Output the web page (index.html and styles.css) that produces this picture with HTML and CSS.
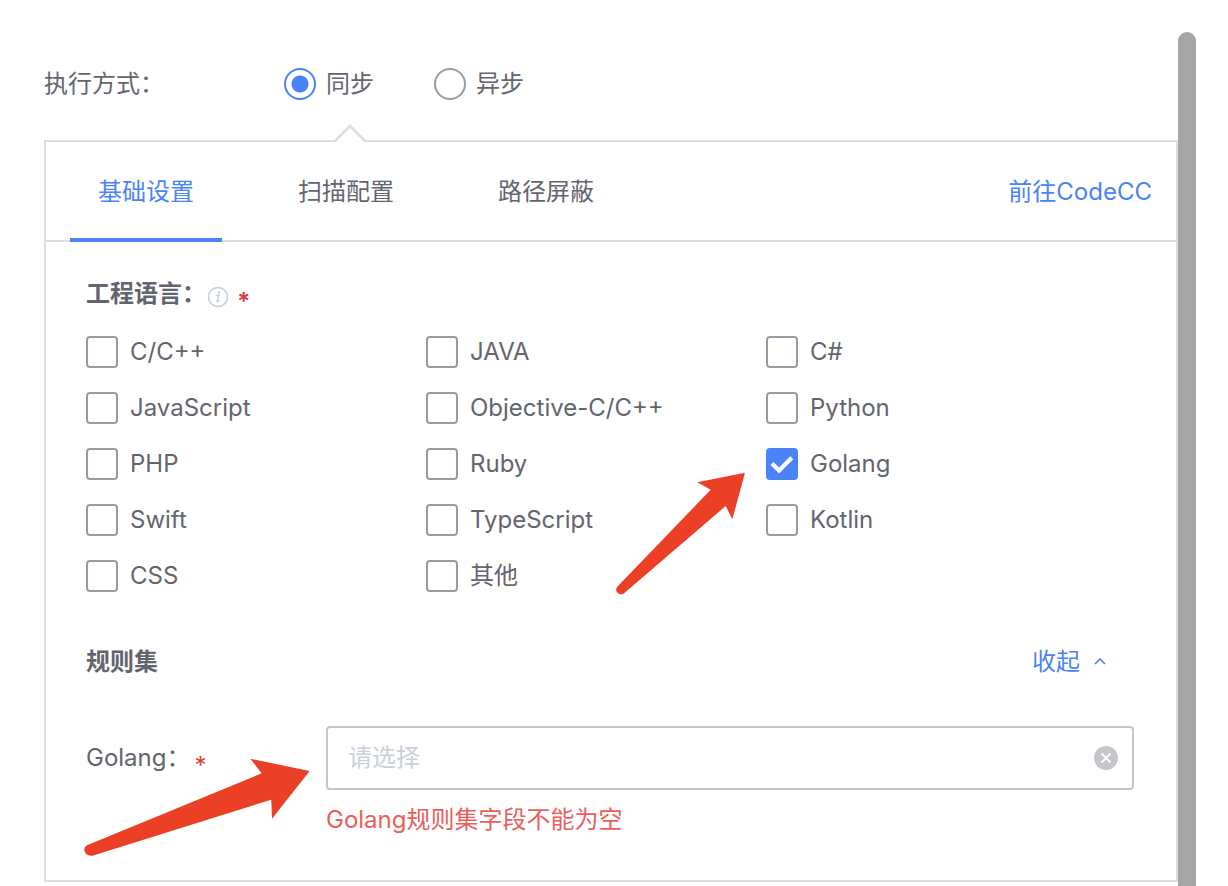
FILE: index.html
```html
<!DOCTYPE html>
<html lang="zh-CN">
<head>
<meta charset="utf-8">
<meta name="viewport" content="width=device-width, initial-scale=1">
<title>CodeCC</title>
<link rel="stylesheet" href="styles.css">
</head>
<body>
<div class="page">
  <main class="content">
    <div class="mode-row" role="radiogroup" aria-labelledby="mode-label">
      <span class="field-label" id="mode-label">执行方式：</span>
      <div class="radios">
        <label class="option"><input class="radio" type="radio" name="mode" checked>同步</label>
        <label class="option"><input class="radio" type="radio" name="mode">异步</label>
      </div>
    </div>

    <section class="panel">
      <svg class="panel-pointer" width="32" height="18" viewBox="0 0 32 18" aria-hidden="true">
        <path d="M1 18 L16 2 L31 18 Z" fill="#fff"/>
        <path d="M0.5 17.5 L16 2 L31.5 17.5" fill="none" stroke="#dcdee5" stroke-width="2.8"/>
      </svg>

      <header class="tabs">
        <div class="tab-list" role="tablist">
          <button class="tab tab-active" type="button" role="tab" aria-selected="true">基础设置</button>
          <button class="tab" type="button" role="tab" aria-selected="false">扫描配置</button>
          <button class="tab" type="button" role="tab" aria-selected="false">路径屏蔽</button>
        </div>
        <a class="link" href="#">前往CodeCC</a>
      </header>

      <div class="panel-body">
        <div class="heading">
          <h2 class="title">工程语言：</h2>
          <svg class="info" width="22" height="22" viewBox="0 0 22 22" aria-hidden="true">
            <circle cx="11" cy="11" r="9.5" fill="none" stroke="#c4cdd9" stroke-width="1.5"/>
            <circle cx="12" cy="6.4" r="1.2" fill="#c4cdd9"/>
            <path d="M9.2 9.6 L11.8 9.1 L10.2 15.2 Q10.2 16.2 12.7 14.5" fill="none" stroke="#c4cdd9" stroke-width="1.4"/>
          </svg>
          <span class="required required-bold">*</span>
        </div>

        <div class="languages">
          <label class="option check-option"><input class="check" type="checkbox">C/C++</label>
          <label class="option check-option"><input class="check" type="checkbox">JAVA</label>
          <label class="option check-option"><input class="check" type="checkbox">C#</label>
          <label class="option check-option"><input class="check" type="checkbox">JavaScript</label>
          <label class="option check-option"><input class="check" type="checkbox">Objective-C/C++</label>
          <label class="option check-option"><input class="check" type="checkbox">Python</label>
          <label class="option check-option"><input class="check" type="checkbox">PHP</label>
          <label class="option check-option"><input class="check" type="checkbox">Ruby</label>
          <label class="option check-option"><span class="check-box"><input class="check" type="checkbox" checked><svg class="tick" width="32" height="32" viewBox="0 0 32 32" aria-hidden="true"><path d="M6 15.5 L13 22.5 L25.8 9.7" fill="none" stroke="#fff" stroke-width="4.2"/></svg></span>Golang</label>
          <label class="option check-option"><input class="check" type="checkbox">Swift</label>
          <label class="option check-option"><input class="check" type="checkbox">TypeScript</label>
          <label class="option check-option"><input class="check" type="checkbox">Kotlin</label>
          <label class="option check-option"><input class="check" type="checkbox">CSS</label>
          <label class="option check-option"><input class="check" type="checkbox">其他</label>
        </div>

        <div class="rules-head">
          <h2 class="title">规则集</h2>
          <button class="collapse" type="button">收起
            <svg width="12" height="8" viewBox="0 0 12 8" aria-hidden="true"><path d="M1 6 L6 1 L11 6" fill="none" stroke="#4a83f8" stroke-width="1.6"/></svg>
          </button>
        </div>

        <div class="rule">
          <label class="field-label rule-label" for="golang-rules">Golang：<span class="required">*</span></label>
          <div class="rule-field">
            <div class="picker">
              <input class="picker-input" id="golang-rules" type="text" placeholder="请选择">
              <button class="clear" type="button" aria-label="清除">
                <svg width="24" height="24" viewBox="0 0 24 24" aria-hidden="true"><circle cx="12" cy="12" r="12" fill="#c4c6cc"/><path d="M7.5 7.5 L16.5 16.5 M16.5 7.5 L7.5 16.5" stroke="#fff" stroke-width="2"/></svg>
              </button>
            </div>
            <p class="error">Golang规则集字段不能为空</p>
          </div>
        </div>
      </div>

      <svg class="arrow arrow-language" width="130" height="124" viewBox="616 472 130 124" aria-hidden="true">
        <path d="M745 472.7 L697.3 482.3 L710.7 489.7 L617.3 586.8 Q614.8 590 617.5 592.7 Q620.6 595.6 624.4 593 L725.7 506 L732.3 519.3 Z" fill="#eb4025"/>
      </svg>
      <svg class="arrow arrow-rule" width="226" height="100" viewBox="84 758 226 100" aria-hidden="true">
        <path d="M309.7 771 L250.3 758.7 L261.7 773.3 L87 845.2 Q83.3 847 84.6 851.5 Q86.6 856.6 93.3 855.4 L271.3 799.7 L272 818.7 Z" fill="#eb4025"/>
      </svg>
    </section>
  </main>
  <div class="scroll-thumb"></div>
</div>
</body>
</html>
```

FILE: styles.css
```css
* {
  box-sizing: border-box;
}

body {
  margin: 0;
  background: #fff;
  color: #63656e;
  font-family: Inter, "Noto Sans CJK SC", sans-serif;
  font-size: 24px;
  line-height: 32px;
}

button,
input {
  margin: 0;
  font: inherit;
}

button {
  padding: 0;
  border: 0;
  background: none;
  color: inherit;
  cursor: pointer;
}

.page {
  display: flex;
  min-height: 100vh;
  padding: 32px 32px 0 44px;
}

.content {
  flex: 1;
  min-width: 0;
  padding: 32px 0 4px;
}

.scroll-thumb {
  flex: none;
  width: 18px;
  border-radius: 9px 9px 0 0;
  background: #a5a5a5;
}

.mode-row {
  display: flex;
  align-items: center;
  height: 40px;
  margin-bottom: 36px;
}

.field-label {
  flex: none;
  width: 240px;
}

.radios {
  display: flex;
  gap: 60px;
}

.option {
  display: flex;
  align-items: center;
  gap: 10px;
  cursor: pointer;
}

.check-option {
  gap: 12px;
}

.radio,
.check {
  flex: none;
  display: block;
  width: 32px;
  height: 32px;
  appearance: none;
  border: 2px solid #979ba5;
  background: #fff;
}

.radio {
  border-radius: 50%;
}

.radio:checked {
  border-color: #4a83f8;
  background: radial-gradient(circle, #4a83f8 8px, #fff 9px);
}

.check {
  border-radius: 4px;
}

.check:checked {
  border-color: #4a83f8;
  background: #4a83f8;
}

.check-box {
  position: relative;
}

.tick {
  position: absolute;
  top: 0;
  left: 0;
  pointer-events: none;
}

.panel {
  position: relative;
  border: 2px solid #dcdee5;
}

.panel-pointer {
  position: absolute;
  top: -18px;
  left: 288px;
}

.tabs {
  display: flex;
  justify-content: space-between;
  padding: 0 24px;
  border-bottom: 2px solid #dcdee5;
}

.tab-list {
  display: flex;
  gap: 48px;
  margin-bottom: -2px;
}

.tab {
  height: 100px;
  padding: 0 28px;
  border-top: 4px solid transparent;
  border-bottom: 4px solid transparent;
}

.tab-active {
  border-bottom-color: #4a83f8;
  color: #4a83f8;
}

.link {
  color: #4a83f8;
  line-height: 100px;
  margin-bottom: -2px;
  text-decoration: none;
}

.panel-body {
  padding: 36px 42px 44px 40px;
}

.heading {
  display: flex;
  align-items: center;
  height: 32px;
  margin-bottom: 26px;
}

.title {
  margin: 0;
  font-size: 24px;
  line-height: 32px;
  font-weight: 700;
}

.info {
  margin: 6px 8px 0 1px;
}

.required {
  color: #d9403b;
}

.required-bold {
  padding-top: 16px;
  line-height: 24px;
  font-weight: 700;
}

.languages {
  display: grid;
  grid-template-columns: repeat(3, 1fr);
  row-gap: 24px;
  padding-right: 28px;
}

.rules-head {
  display: flex;
  justify-content: space-between;
  margin: 54px 0 48px;
  padding-right: 28px;
}

.collapse {
  display: flex;
  align-items: center;
  gap: 14px;
  color: #4a83f8;
}

.rule {
  display: flex;
}

.rule-label {
  display: flex;
  align-items: center;
  gap: 4px;
  height: 64px;
}

.rule-label .required {
  padding-top: 16px;
}

.rule-field {
  flex: 1;
  min-width: 0;
}

.picker {
  display: flex;
  align-items: center;
  height: 64px;
  padding: 0 14px 0 20px;
  border: 2px solid #c4c6cc;
  border-radius: 4px;
}

.picker-input {
  flex: 1;
  min-width: 0;
  padding: 0;
  border: 0;
  outline: 0;
  background: transparent;
  color: inherit;
}

.picker-input::placeholder {
  color: #c9d0da;
}

.clear {
  display: flex;
}

.error {
  margin: 14px 0 0;
  color: #ea5e5b;
}

.arrow {
  position: absolute;
  pointer-events: none;
}

.arrow-language {
  top: 330px;
  left: 570px;
}

.arrow-rule {
  top: 616px;
  left: 38px;
}
```
